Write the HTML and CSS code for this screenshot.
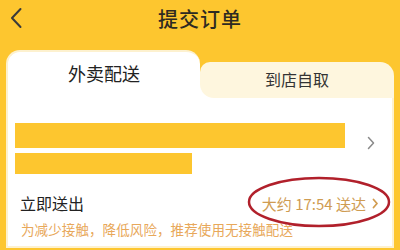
FILE: index.html
```html
<!DOCTYPE html>
<html lang="zh-CN">
<head>
<meta charset="utf-8">
<link rel="stylesheet" href="styles.css">
</head>
<body>
<div class="page">
  <header class="nav">
    <svg class="back" width="14" height="22" viewBox="0 0 14 22"><path d="M11.5 2 L3 11 L11.5 20" fill="none" stroke="#3a3a3a" stroke-width="2" stroke-linecap="round" stroke-linejoin="round"/></svg>
    <h1 class="title">提交订单</h1>
  </header>
  <div class="card">
    <div class="tabs">
      <div class="tab tab-active">外卖配送</div>
      <div class="tab-slot"><div class="tab tab-rest">到店自取</div></div>
    </div>
    <div class="body">
      <div class="address">
        <div class="bars">
          <div class="bar bar1"></div>
          <div class="bar bar2"></div>
        </div>
        <svg class="chev" width="8" height="14" viewBox="0 0 8 14"><path d="M1.5 1.5 L6.5 7 L1.5 12.5" fill="none" stroke="#8a8a8a" stroke-width="1.5" stroke-linecap="round" stroke-linejoin="round"/></svg>
      </div>
      <div class="send-row">
        <span class="send-label">立即送出</span>
        <span class="send-time">大约 17:54 送达 <svg class="chev-s" width="7" height="11" viewBox="0 0 7 11"><path d="M1.5 1.5 L5 5.5 L1.5 9.5" fill="none" stroke="#d19c4f" stroke-width="1.8" stroke-linecap="round" stroke-linejoin="round"/></svg></span>
        <svg class="ring" width="144" height="52" viewBox="0 0 144 52"><ellipse cx="72" cy="26" rx="70" ry="24" fill="none" stroke="#b1202b" stroke-width="2.5"/></svg>
      </div>
      <div class="note">为减少接触，降低风险，推荐使用无接触配送</div>
    </div>
  </div>
</div>
</body>
</html>
```

FILE: styles.css
```css
html, body {
  margin: 0;
  padding: 0;
}
body {
  width: 400px;
  height: 250px;
  overflow: hidden;
  background: #fdc62f;
  font-family: "Noto Sans CJK SC", "Noto Sans", sans-serif;
}
.page {
  display: flex;
  flex-direction: column;
}
.nav {
  height: 50px;
  position: relative;
  display: flex;
  align-items: center;
  justify-content: center;
}
.back {
  position: absolute;
  left: 9px;
  top: 7px;
}
.title {
  margin: 0;
  margin-top: -14px;
  font-size: 20px;
  font-weight: 500;
  color: #2e2a22;
  letter-spacing: 1px;
}
.card {
  margin: 0 6px;
}
.tabs {
  display: flex;
  height: 48px;
}
.tab {
  text-align: center;
}
.tab-active {
  flex: 0 0 194px;
  background: #fff;
  border-radius: 14px 14px 0 0;
  border: 2px solid #fdf1cf;
  border-bottom: none;
  border-right: none;
  box-sizing: border-box;
  padding-top: 9px;
  font-size: 18px;
  line-height: 24px;
  color: #222;
}
.tab-slot {
  flex: 1;
  padding-top: 12px;
  background: linear-gradient(transparent 60%, #fff 60%);
}
.tab-rest {
  height: 36px;
  background: #fef6de;
  border-radius: 10px 14px 0 14px;
  font-size: 16px;
  line-height: 35px;
  color: #333;
}
.body {
  background: #fff;
  height: 150px;
  border: 2px solid #fdf1cf;
  border-top: none;
  box-sizing: border-box;
  padding: 25px 0 0 7px;
}
.address {
  display: flex;
  align-items: center;
}
.bars {
  width: 330px;
}
.bar {
  background: #fdc62f;
}
.bar1 {
  height: 25px;
}
.bar2 {
  margin-top: 5px;
  width: 177px;
  height: 21px;
}
.chev {
  margin-left: 22px;
  margin-top: -12px;
}
.send-row {
  position: relative;
  display: flex;
  align-items: center;
  justify-content: space-between;
  margin-top: 17px;
  padding: 0 13px 0 5px;
  height: 24px;
}
.send-label {
  font-size: 16px;
  color: #222;
}
.send-time {
  font-size: 15px;
  color: #cf9c52;
  display: flex;
  align-items: center;
  gap: 6px;
}
.ring {
  position: absolute;
  left: 232px;
  top: -15px;
}
.note {
  margin-top: 5px;
  padding-left: 6px;
  font-size: 13.5px;
  line-height: 18px;
  color: #e8a85a;
  letter-spacing: 0.1px;
}
```
